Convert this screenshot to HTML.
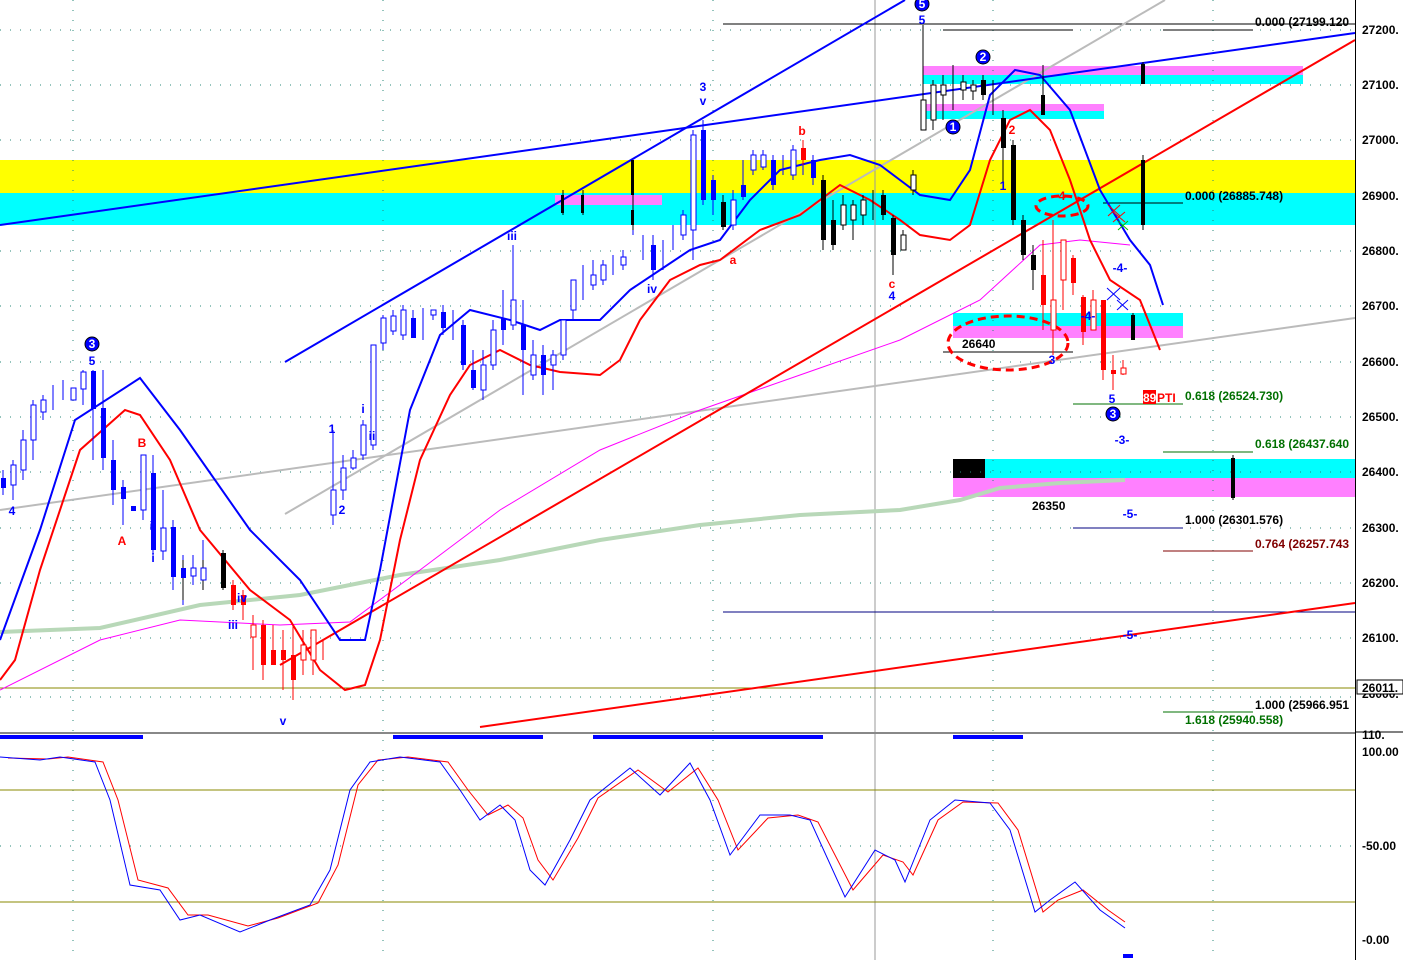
<!DOCTYPE html>
<html><head><meta charset="utf-8"><style>
html,body{margin:0;padding:0;background:#fff;overflow:hidden}
svg{display:block}
text{font-family:"Liberation Sans",sans-serif;font-weight:bold;font-size:12px}
</style></head><body>
<svg width="1403" height="960" viewBox="0 0 1403 960" xmlns="http://www.w3.org/2000/svg">
<rect width="1403" height="960" fill="#fff"/>
<rect x="0" y="160" width="1355" height="33" fill="#ffff00"/>
<rect x="0" y="193" width="1355" height="32" fill="#00ffff"/>
<rect x="555" y="195" width="107" height="10" fill="#ff80ff"/>
<rect x="923" y="66" width="380" height="9" fill="#ff80ff"/>
<rect x="923" y="75" width="380" height="9" fill="#00ffff"/>
<rect x="923" y="104" width="181" height="7" fill="#ff80ff"/>
<rect x="923" y="111" width="181" height="8" fill="#00ffff"/>
<rect x="953" y="313" width="230" height="13" fill="#00ffff"/>
<rect x="953" y="326" width="230" height="12" fill="#ff80ff"/>
<rect x="953" y="459" width="402" height="19" fill="#00ffff"/>
<rect x="953" y="459" width="32" height="19" fill="#000"/>
<rect x="953" y="478" width="402" height="19" fill="#ff80ff"/>
<g stroke="#2a8a7a" stroke-width="1" stroke-dasharray="1 9">
<line x1="0" y1="30" x2="1355" y2="30"/><line x1="0" y1="85" x2="1355" y2="85"/><line x1="0" y1="140" x2="1355" y2="140"/><line x1="0" y1="251" x2="1355" y2="251"/><line x1="0" y1="306" x2="1355" y2="306"/><line x1="0" y1="362" x2="1355" y2="362"/><line x1="0" y1="417" x2="1355" y2="417"/><line x1="0" y1="472" x2="1355" y2="472"/><line x1="0" y1="528" x2="1355" y2="528"/><line x1="0" y1="583" x2="1355" y2="583"/><line x1="0" y1="638" x2="1355" y2="638"/><line x1="0" y1="697" x2="1355" y2="697"/>
<line x1="0" y1="846" x2="1355" y2="846"/>
<line x1="73" y1="0" x2="73" y2="960"/><line x1="383" y1="0" x2="383" y2="960"/><line x1="713" y1="0" x2="713" y2="960"/><line x1="993" y1="0" x2="993" y2="960"/><line x1="1213" y1="0" x2="1213" y2="960"/>
</g>
<line x1="875" y1="0" x2="875" y2="960" stroke="#999" stroke-width="1"/>
<line x1="0" y1="688" x2="1355" y2="688" stroke="#8a8a00"/>
<line x1="723" y1="24" x2="1355" y2="24" stroke="#000"/>
<line x1="943" y1="30" x2="1073" y2="30" stroke="#000"/>
<line x1="1163" y1="30" x2="1253" y2="30" stroke="#000"/>
<line x1="1103" y1="203" x2="1183" y2="203" stroke="#000"/>
<line x1="723" y1="612" x2="1355" y2="612" stroke="#000080"/>
<line x1="943" y1="352" x2="1073" y2="352" stroke="#000"/>
<line x1="1073" y1="404" x2="1183" y2="404" stroke="#007000"/>
<line x1="1163" y1="452" x2="1253" y2="452" stroke="#007000"/>
<line x1="1073" y1="528" x2="1183" y2="528" stroke="#000080"/>
<line x1="1163" y1="551" x2="1253" y2="551" stroke="#800000"/>
<line x1="1163" y1="712" x2="1253" y2="712" stroke="#007000"/>
<g fill="none" stroke-width="2">
<line x1="0" y1="510" x2="1355" y2="318" stroke="#bbb"/>
<line x1="285" y1="514" x2="1165" y2="0" stroke="#bbb"/>
<polyline stroke="#b8d8b8" stroke-width="4" points="0,632 100,628 200,605 300,595 400,575 500,560 600,540 700,525 800,515 900,510 960,500 1000,488 1060,483 1125,480"/>
<polyline stroke="#ff00ff" stroke-width="1" points="0,690 100,640 180,620 280,625 350,622 420,570 500,510 600,450 700,410 800,375 900,340 980,300 1040,245 1080,240 1130,245"/>
<line x1="0" y1="225" x2="1355" y2="33" stroke="#0000ff"/>
<line x1="285" y1="362" x2="905" y2="0" stroke="#0000ff"/>
<line x1="280" y1="665" x2="1355" y2="40" stroke="#ff0000"/>
<line x1="480" y1="727" x2="1355" y2="603" stroke="#ff0000"/>
<polyline stroke="#0000ff" points="0,640 40,530 75,420 140,378 180,430 250,530 300,580 340,640 365,640 380,570 410,410 440,335 470,310 510,320 540,330 560,320 600,320 630,290 660,270 690,250 720,240 750,200 780,170 820,160 850,155 880,165 900,180 920,195 950,200 970,170 990,95 1015,70 1040,75 1070,110 1100,190 1130,240 1150,265 1163,305"/>
<polyline stroke="#ff0000" points="0,680 15,660 40,570 80,450 125,410 140,415 170,460 200,530 250,590 290,620 320,670 345,690 365,685 380,640 400,540 420,460 450,395 470,365 500,350 530,365 560,372 600,375 620,360 640,320 670,280 700,265 720,260 760,230 800,215 840,185 870,200 900,220 920,235 950,240 970,225 990,160 1010,120 1030,110 1050,130 1070,180 1090,240 1110,280 1140,300 1160,350"/>
</g>
<ellipse cx="1008" cy="343" rx="60" ry="27" fill="none" stroke="#ff0000" stroke-width="3" stroke-dasharray="8 5"/>
<ellipse cx="1062" cy="206" rx="26" ry="10" fill="none" stroke="#ff0000" stroke-width="3" stroke-dasharray="8 5"/>
<path stroke="#0000ff" stroke-width="1" fill="none" d="M3 470V495M13 460V500M23 430V480M33 400V460M43 395V420M53 385V410M63 380V400M83 370V405M93 370V460M103 370V470M113 440V505M123 480V525M143 455V520M153 455V555M163 490V560M173 520V590M183 555V605M193 555V585M203 540V590M333 430V525M343 455V500M353 450V470M363 420V460M373 360V450M383 315V350M393 310V335M403 305V340M413 310V330M423 308V340M433 310V320M443 305V335M453 310V340M463 320V370M473 350V390M483 350V400M493 320V370M503 290V345M513 245V330M523 300V395M533 340V380M543 345V395M553 350V390M563 340V360M573 280V320M583 265V300M593 260V290M603 260V285M613 255V275M623 250V270M633 210V235M643 235V260M653 235V280M663 240V270M673 225V250M683 210V240M693 130V260M703 120V205M713 175V215M733 190V230M743 160V200M753 150V175M763 150V170M773 155V190M783 155V175M793 145V180M803 140V175M813 155V185"/>
<path stroke="#000" stroke-width="1" fill="none" d="M183 560V600M203 560V590M223 550V590M563 190V215M583 190V215M633 160V230M723 195V230M823 175V250M833 200V250M843 195V230M853 200V240M863 195V225M873 190V220M883 190V220M893 215V275M903 230V250M913 170V195M923 25V130M933 80V130M943 75V120M953 65V110M963 75V100M973 80V100M983 75V100M993 80V115M1003 110V190M1013 140V225M1023 215V260M1033 245V290M1043 65V115M1143 155V230M1133 313V340M1233 455V500M1143 62V84"/>
<path stroke="#ff0000" stroke-width="1" fill="none" d="M233 580V610M243 590V620M253 615V670M263 620V680M273 625V665M283 630V690M293 625V700M303 630V675M313 640V675M323 640V660M803 140V165M1043 240V330M1053 220V355M1063 245V310M1073 255V295M1083 295V345M1093 290V330M1103 300V380M1113 355V390M1123 360V375"/>
<g fill="#0000ff">
<rect x="1" y="478" width="5" height="10"/><rect x="91" y="371" width="5" height="38"/><rect x="101" y="408" width="5" height="50"/><rect x="111" y="460" width="5" height="30"/><rect x="121" y="487" width="5" height="12"/><rect x="131" y="506" width="5" height="5"/><rect x="151" y="473" width="5" height="77"/><rect x="171" y="527" width="5" height="50"/><rect x="181" y="568" width="5" height="10"/>
<rect x="411" y="318" width="5" height="20"/><rect x="441" y="312" width="5" height="16"/><rect x="461" y="325" width="5" height="40"/><rect x="471" y="370" width="5" height="18"/><rect x="501" y="318" width="5" height="12"/><rect x="521" y="325" width="5" height="25"/><rect x="541" y="355" width="5" height="20"/><rect x="651" y="245" width="5" height="25"/><rect x="701" y="130" width="5" height="70"/><rect x="711" y="180" width="5" height="20"/><rect x="741" y="185" width="5" height="12"/><rect x="771" y="160" width="5" height="25"/><rect x="811" y="160" width="5" height="18"/>
</g>
<g fill="#fff" stroke="#0000ff">
<rect x="11" y="465" width="5" height="20"/><rect x="21" y="440" width="5" height="30"/><rect x="31" y="405" width="5" height="35"/><rect x="41" y="400" width="5" height="12"/><rect x="71" y="388" width="5" height="12"/><rect x="81" y="372" width="5" height="17"/><rect x="141" y="455" width="5" height="55"/><rect x="161" y="528" width="5" height="23"/><rect x="191" y="568" width="5" height="8"/><rect x="201" y="568" width="5" height="12"/>
<rect x="331" y="490" width="5" height="25"/><rect x="341" y="468" width="5" height="22"/><rect x="351" y="458" width="5" height="10"/><rect x="361" y="425" width="5" height="30"/><rect x="371" y="345" width="5" height="100"/><rect x="381" y="318" width="5" height="25"/><rect x="391" y="316" width="5" height="15"/><rect x="401" y="310" width="5" height="25"/><rect x="431" y="310" width="5" height="5"/><rect x="481" y="365" width="5" height="25"/><rect x="491" y="330" width="5" height="35"/><rect x="511" y="300" width="5" height="25"/><rect x="531" y="355" width="5" height="20"/><rect x="551" y="355" width="5" height="10"/><rect x="561" y="320" width="5" height="35"/><rect x="571" y="280" width="5" height="30"/><rect x="591" y="275" width="5" height="10"/><rect x="601" y="265" width="5" height="15"/><rect x="621" y="257" width="5" height="8"/><rect x="681" y="215" width="5" height="20"/><rect x="691" y="135" width="5" height="95"/><rect x="731" y="200" width="5" height="25"/><rect x="751" y="155" width="5" height="15"/><rect x="761" y="155" width="5" height="12"/><rect x="791" y="150" width="5" height="25"/>
</g>
<g fill="#000">
<rect x="221" y="553" width="5" height="35"/><rect x="561" y="195" width="3" height="18"/><rect x="581" y="195" width="3" height="18"/><rect x="631" y="160" width="3" height="35"/><rect x="631" y="210" width="3" height="15"/><rect x="721" y="202" width="5" height="25"/><rect x="821" y="180" width="5" height="60"/><rect x="831" y="220" width="5" height="25"/><rect x="881" y="195" width="5" height="20"/><rect x="891" y="218" width="5" height="37"/><rect x="1001" y="118" width="5" height="30"/><rect x="1011" y="145" width="5" height="75"/><rect x="1021" y="220" width="5" height="35"/><rect x="1031" y="255" width="5" height="15"/><rect x="1041" y="95" width="4" height="20"/><rect x="1141" y="160" width="4" height="65"/><rect x="1131" y="315" width="4" height="25"/><rect x="1231" y="458" width="4" height="40"/><rect x="1141" y="64" width="4" height="20"/><rect x="981" y="80" width="5" height="15"/>
</g>
<g fill="#fff" stroke="#000">
<rect x="841" y="205" width="5" height="20"/><rect x="851" y="205" width="5" height="15"/><rect x="861" y="200" width="5" height="15"/><rect x="901" y="235" width="5" height="15"/><rect x="911" y="175" width="5" height="15"/><rect x="921" y="100" width="5" height="30"/><rect x="931" y="85" width="5" height="35"/><rect x="941" y="85" width="5" height="10"/><rect x="961" y="82" width="5" height="8"/><rect x="971" y="85" width="5" height="6"/>
</g>
<g fill="#ff0000">
<rect x="231" y="585" width="5" height="20"/><rect x="241" y="595" width="5" height="10"/><rect x="261" y="625" width="5" height="40"/><rect x="271" y="650" width="5" height="15"/><rect x="281" y="650" width="5" height="10"/><rect x="291" y="655" width="5" height="25"/><rect x="1041" y="275" width="5" height="30"/><rect x="1071" y="258" width="5" height="25"/><rect x="1081" y="297" width="5" height="35"/><rect x="1101" y="300" width="5" height="70"/><rect x="1111" y="370" width="5" height="4"/><rect x="801" y="148" width="5" height="12"/>
</g>
<g fill="#fff" stroke="#ff0000">
<rect x="251" y="625" width="5" height="12"/><rect x="301" y="645" width="5" height="15"/><rect x="311" y="630" width="5" height="30"/><rect x="1051" y="300" width="5" height="30"/><rect x="1091" y="300" width="5" height="30"/><rect x="1121" y="368" width="5" height="6"/><rect x="1061" y="240" width="5" height="40"/>
</g>
<g stroke-width="1"><path d="M1107 288L1120 300M1120 288L1107 300M1117 300L1128 310M1128 300L1117 310" stroke="#0000ff"/><path d="M1108 205L1120 216M1120 205L1108 216M1113 212L1125 222M1125 212L1113 222" stroke="#ff0000"/><path d="M1118 221L1128 230M1128 221L1118 230" stroke="#00c000"/></g>
<g fill="#0000ff" stroke="#000"><circle cx="922" cy="4" r="7"/><circle cx="983" cy="57" r="7"/><circle cx="953" cy="127" r="7"/><circle cx="92" cy="344" r="7"/><circle cx="1113" cy="414" r="7"/></g>
<g fill="#fff" font-size="11" text-anchor="middle"><text x="922" y="8">5</text><text x="983" y="61">2</text><text x="953" y="131">1</text><text x="92" y="348">3</text><text x="1113" y="418">3</text></g>
<g fill="#0000ff" text-anchor="middle">
<text x="922" y="24">5</text><text x="703" y="91">3</text><text x="703" y="105">v</text><text x="512" y="240">iii</text><text x="652" y="293">iv</text><text x="92" y="365">5</text><text x="12" y="515">4</text><text x="153" y="530">ii</text><text x="153" y="562">i</text><text x="242" y="602">iv</text><text x="233" y="629">iii</text><text x="283" y="725">v</text><text x="332" y="433">1</text><text x="342" y="514">2</text><text x="363" y="413">i</text><text x="372" y="440">ii</text><text x="892" y="300">4</text><text x="1003" y="190">1</text><text x="1052" y="364">3</text><text x="1112" y="403">5</text><text x="1088" y="320">-4-</text><text x="1120" y="272">-4-</text><text x="1122" y="444">-3-</text><text x="1130" y="518">-5-</text><text x="1130" y="639">-5-</text>
</g>
<g fill="#ff0000" text-anchor="middle"><text x="802" y="135">b</text><text x="733" y="264">a</text><text x="892" y="288">c</text><text x="142" y="447">B</text><text x="122" y="545">A</text><text x="1012" y="134">2</text><text x="1062" y="200">4</text></g>
<g fill="#000"><text x="962" y="348">26640</text><text x="1032" y="510">26350</text><text x="1255" y="26">0.000 (27199.120</text><text x="1185" y="200">0.000 (26885.748)</text><text x="1185" y="524">1.000 (26301.576)</text><text x="1255" y="709">1.000 (25966.951</text></g>
<g fill="#007000"><text x="1185" y="400">0.618 (26524.730)</text><text x="1255" y="448">0.618 (26437.640</text><text x="1185" y="724">1.618 (25940.558)</text></g>
<text x="1255" y="548" fill="#800000">0.764 (26257.743</text>
<rect x="1143" y="390" width="13" height="14" fill="#ff0000"/><text x="1143" y="402" fill="#fff">89</text><text x="1157" y="402" fill="#ff0000">PTI</text>
<rect x="0" y="732" width="1355" height="2" fill="#888"/>
<g fill="#0000ff"><rect x="0" y="735" width="143" height="4"/><rect x="393" y="735" width="150" height="4"/><rect x="593" y="735" width="230" height="4"/><rect x="953" y="735" width="70" height="4"/><rect x="1123" y="954" width="10" height="4"/></g>
<line x1="0" y1="790" x2="1355" y2="790" stroke="#8a8a00"/>
<line x1="0" y1="902" x2="1355" y2="902" stroke="#8a8a00"/>
<polyline fill="none" stroke="#ff0000" points="8,758 48,759 68,757 103,762 118,800 138,880 168,888 188,915 208,915 248,926 278,918 318,903 338,865 358,785 378,760 408,757 448,762 468,790 488,815 508,805 523,818 538,860 553,880 578,838 598,798 638,770 668,792 698,768 718,800 738,850 768,818 798,815 818,822 853,890 883,855 903,862 913,875 938,820 963,802 998,803 1018,830 1043,912 1058,900 1083,890 1108,910 1125,922"/>
<polyline fill="none" stroke="#0000ff" points="0,757 40,760 60,757 95,762 110,800 130,885 160,890 180,920 200,915 240,932 270,920 310,905 330,870 350,790 370,762 400,757 440,762 460,790 480,820 500,805 515,820 530,870 545,885 570,840 590,800 630,768 660,795 690,763 710,800 730,855 760,815 790,815 810,820 845,897 875,850 895,860 905,882 930,820 955,800 990,803 1010,830 1035,912 1050,900 1075,882 1100,910 1125,928"/>
<rect x="1356" y="0" width="47" height="960" fill="#fff"/>
<line x1="1355.5" y1="0" x2="1355.5" y2="960" stroke="#000"/>
<g fill="#000" font-size="13"><text x="1362" y="34">27200.</text><text x="1362" y="89">27100.</text><text x="1362" y="144">27000.</text><text x="1362" y="200">26900.</text><text x="1362" y="255">26800.</text><text x="1362" y="310">26700.</text><text x="1362" y="366">26600.</text><text x="1362" y="421">26500.</text><text x="1362" y="476">26400.</text><text x="1362" y="532">26300.</text><text x="1362" y="587">26200.</text><text x="1362" y="642">26100.</text><text x="1362" y="698">26000.</text><text x="1362" y="739">110.</text><text x="1362" y="756">100.00</text><text x="1362" y="850">-50.00</text><text x="1362" y="944">-0.00</text></g>
<rect x="1357" y="680" width="46" height="14" fill="#fff" stroke="#000"/><text x="1362" y="692" fill="#000">26011.</text>
<line x1="1356" y1="732" x2="1403" y2="732" stroke="#000"/>
</svg>
</body></html>
